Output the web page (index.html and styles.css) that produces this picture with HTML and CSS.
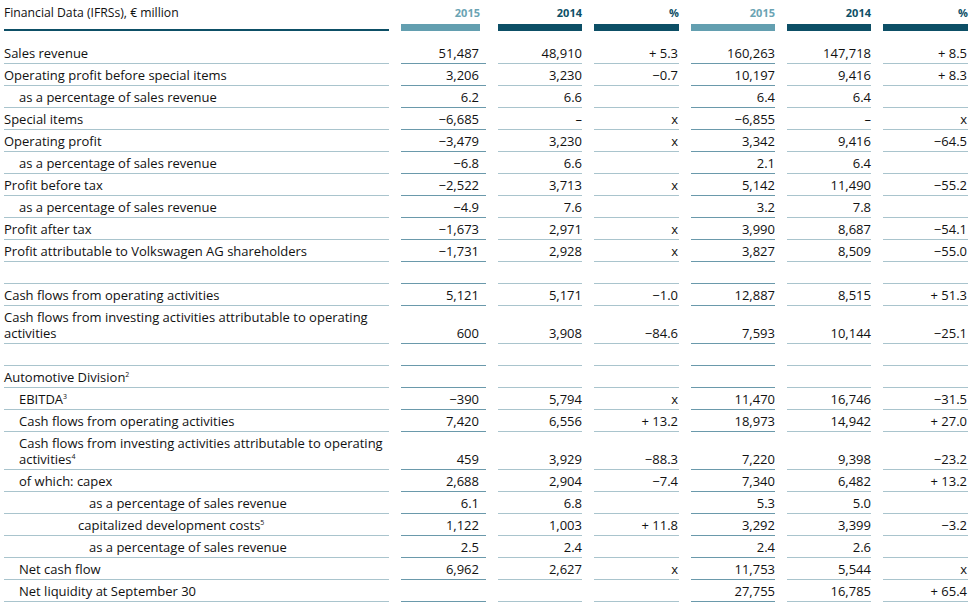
FILE: index.html
```html
<!DOCTYPE html>
<html lang="en">
<head>
<meta charset="utf-8">
<title>Financial Data</title>
<link rel="stylesheet" href="styles.css">
</head>
<body>
<div class="table">
  <div class="row head">
    <div class="lbl">Financial Data (IFRSs), € million</div>
    <div class="hc c1 light">2015</div>
    <div class="hc c2">2014</div>
    <div class="hc c3">%</div>
    <div class="hc c4 light">2015</div>
    <div class="hc c5">2014</div>
    <div class="hc c6">%</div>
  </div>
  <div class="body">
    <div class="row"><div class="lbl">Sales revenue</div><div class="v c1">51,487</div><div class="v c2">48,910</div><div class="v c3">+ 5.3</div><div class="v c4">160,263</div><div class="v c5">147,718</div><div class="v c6">+ 8.5</div></div>
    <div class="row"><div class="lbl">Operating profit before special items</div><div class="v c1">3,206</div><div class="v c2">3,230</div><div class="v c3">−0.7</div><div class="v c4">10,197</div><div class="v c5">9,416</div><div class="v c6">+ 8.3</div></div>
    <div class="row"><div class="lbl i1">as a percentage of sales revenue</div><div class="v c1">6.2</div><div class="v c2">6.6</div><div class="v c3"></div><div class="v c4">6.4</div><div class="v c5">6.4</div><div class="v c6"></div></div>
    <div class="row"><div class="lbl">Special items</div><div class="v c1">−6,685</div><div class="v c2">–</div><div class="v c3">x</div><div class="v c4">−6,855</div><div class="v c5">–</div><div class="v c6">x</div></div>
    <div class="row"><div class="lbl">Operating profit</div><div class="v c1">−3,479</div><div class="v c2">3,230</div><div class="v c3">x</div><div class="v c4">3,342</div><div class="v c5">9,416</div><div class="v c6">−64.5</div></div>
    <div class="row"><div class="lbl i1">as a percentage of sales revenue</div><div class="v c1">−6.8</div><div class="v c2">6.6</div><div class="v c3"></div><div class="v c4">2.1</div><div class="v c5">6.4</div><div class="v c6"></div></div>
    <div class="row"><div class="lbl">Profit before tax</div><div class="v c1">−2,522</div><div class="v c2">3,713</div><div class="v c3">x</div><div class="v c4">5,142</div><div class="v c5">11,490</div><div class="v c6">−55.2</div></div>
    <div class="row"><div class="lbl i1">as a percentage of sales revenue</div><div class="v c1">−4.9</div><div class="v c2">7.6</div><div class="v c3"></div><div class="v c4">3.2</div><div class="v c5">7.8</div><div class="v c6"></div></div>
    <div class="row"><div class="lbl">Profit after tax</div><div class="v c1">−1,673</div><div class="v c2">2,971</div><div class="v c3">x</div><div class="v c4">3,990</div><div class="v c5">8,687</div><div class="v c6">−54.1</div></div>
    <div class="row"><div class="lbl">Profit attributable to Volkswagen AG shareholders</div><div class="v c1">−1,731</div><div class="v c2">2,928</div><div class="v c3">x</div><div class="v c4">3,827</div><div class="v c5">8,509</div><div class="v c6">−55.0</div></div>
    <div class="row"><div class="lbl"></div><div class="v c1"></div><div class="v c2"></div><div class="v c3"></div><div class="v c4"></div><div class="v c5"></div><div class="v c6"></div></div>
    <div class="row"><div class="lbl">Cash flows from operating activities</div><div class="v c1">5,121</div><div class="v c2">5,171</div><div class="v c3">−1.0</div><div class="v c4">12,887</div><div class="v c5">8,515</div><div class="v c6">+ 51.3</div></div>
    <div class="row"><div class="lbl">Cash flows from investing activities attributable to operating activities</div><div class="v c1">600</div><div class="v c2">3,908</div><div class="v c3">−84.6</div><div class="v c4">7,593</div><div class="v c5">10,144</div><div class="v c6">−25.1</div></div>
    <div class="row"><div class="lbl"></div><div class="v c1"></div><div class="v c2"></div><div class="v c3"></div><div class="v c4"></div><div class="v c5"></div><div class="v c6"></div></div>
    <div class="row"><div class="lbl">Automotive Division<sup>2</sup></div><div class="v c1"></div><div class="v c2"></div><div class="v c3"></div><div class="v c4"></div><div class="v c5"></div><div class="v c6"></div></div>
    <div class="row"><div class="lbl i1">EBITDA<sup>3</sup></div><div class="v c1">−390</div><div class="v c2">5,794</div><div class="v c3">x</div><div class="v c4">11,470</div><div class="v c5">16,746</div><div class="v c6">−31.5</div></div>
    <div class="row"><div class="lbl i1">Cash flows from operating activities</div><div class="v c1">7,420</div><div class="v c2">6,556</div><div class="v c3">+ 13.2</div><div class="v c4">18,973</div><div class="v c5">14,942</div><div class="v c6">+ 27.0</div></div>
    <div class="row"><div class="lbl i1">Cash flows from investing activities attributable to operating activities<sup>4</sup></div><div class="v c1">459</div><div class="v c2">3,929</div><div class="v c3">−88.3</div><div class="v c4">7,220</div><div class="v c5">9,398</div><div class="v c6">−23.2</div></div>
    <div class="row"><div class="lbl i1">of which: capex</div><div class="v c1">2,688</div><div class="v c2">2,904</div><div class="v c3">−7.4</div><div class="v c4">7,340</div><div class="v c5">6,482</div><div class="v c6">+ 13.2</div></div>
    <div class="row"><div class="lbl i3">as a percentage of sales revenue</div><div class="v c1">6.1</div><div class="v c2">6.8</div><div class="v c3"></div><div class="v c4">5.3</div><div class="v c5">5.0</div><div class="v c6"></div></div>
    <div class="row"><div class="lbl i2">capitalized development costs<sup>5</sup></div><div class="v c1">1,122</div><div class="v c2">1,003</div><div class="v c3">+ 11.8</div><div class="v c4">3,292</div><div class="v c5">3,399</div><div class="v c6">−3.2</div></div>
    <div class="row"><div class="lbl i3">as a percentage of sales revenue</div><div class="v c1">2.5</div><div class="v c2">2.4</div><div class="v c3"></div><div class="v c4">2.4</div><div class="v c5">2.6</div><div class="v c6"></div></div>
    <div class="row"><div class="lbl i1">Net cash flow</div><div class="v c1">6,962</div><div class="v c2">2,627</div><div class="v c3">x</div><div class="v c4">11,753</div><div class="v c5">5,544</div><div class="v c6">x</div></div>
    <div class="row"><div class="lbl i1">Net liquidity at September 30</div><div class="v c1"></div><div class="v c2"></div><div class="v c3"></div><div class="v c4">27,755</div><div class="v c5">16,785</div><div class="v c6">+ 65.4</div></div>
  </div>
</div>
</body>
</html>
```

FILE: styles.css
```css
html, body {
  margin: 0;
  padding: 0;
  background: #ffffff;
}

body {
  font-family: "Open Sans", "Noto Sans", "Liberation Sans", sans-serif;
  font-size: 13px;
  color: #111111;
}

.table {
  padding: 2px 0 0 4px;
  width: 964px;
}

.row {
  display: grid;
  grid-template-columns: 385px 85px 84px 85px 84px 84px 85px;
  column-gap: 12px;
  align-items: end;
}

.head .lbl {
  font-size: 12.2px;
  line-height: 16px;
  padding-bottom: 8px;
  border-bottom: 2px solid #0d4f66;
}

.hc {
  text-align: right;
  font-weight: 700;
  font-size: 11px;
  line-height: 16px;
  padding-bottom: 3px;
  border-bottom: 7px solid #0d4f66;
  color: #0d4f66;
}

.hc.light {
  color: #6aa3b3;
  border-bottom-color: #639fb0;
}

.hc.c1 {
  margin-right: 6px;
}

.body {
  margin-top: 11px;
}

.lbl, .v {
  line-height: 16px;
  min-height: 16px;
  padding: 3px 0 2px;
  border-bottom: 1px solid #a9c4cd;
  align-self: stretch;
}

.v {
  text-align: right;
  display: flex;
  align-items: flex-end;
  justify-content: flex-end;
}

.v.c1 {
  padding-right: 7px;
}

.v.c1, .v.c4 {
  border-bottom-color: #6a99ab;
}

.v.c3, .v.c6 {
  padding-right: 1px;
}

.i1 { padding-left: 15px; }
.i2 { padding-left: 74px; }
.i3 { padding-left: 85px; }

sup {
  font-size: 7px;
  line-height: 0;
  vertical-align: baseline;
  position: relative;
  top: -5px;
}
```
